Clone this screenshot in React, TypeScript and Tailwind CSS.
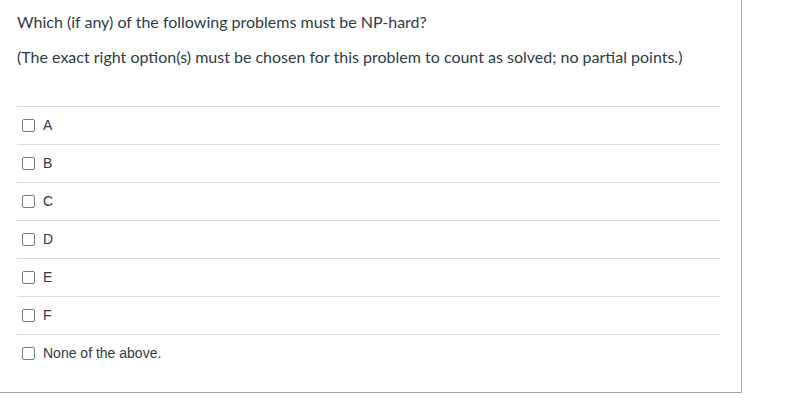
import React from "react";

const options = ["A", "B", "C", "D", "E", "F", "None of the above."];

export default function App() {
  return (
    <div className="w-[807px] h-[401px] bg-white">
      <div className="w-[742px] h-[393px] border-r border-b border-[#a5a5a5] bg-white pl-[17px] pr-[21px] pt-[12px]">
        <div className="font-['Lato','Liberation_Sans',sans-serif] text-[#2d3b45] text-[16px] leading-[20px]">
          <p className="m-0">Which (if any) of the following problems must be NP-hard?</p>
          <p className="m-0 mt-[15px]">
            (The exact right option(s) must be chosen for this problem to count as solved; no partial points.)
          </p>
        </div>
        <div className="mt-[39px]">
          {options.map((o) => (
            <div
              key={o}
              className="h-[38px] border-t border-[#dcdcdc] flex items-center pl-[5px]"
            >
              <span className="w-[13px] h-[13px] border border-[#7a7a7a] rounded-[2px] bg-white shrink-0" />
              <span className="ml-[8px] font-['Liberation_Sans',Arial,sans-serif] text-[14px] text-[#2d3b45]">
                {o}
              </span>
            </div>
          ))}
        </div>
      </div>
    </div>
  );
}
